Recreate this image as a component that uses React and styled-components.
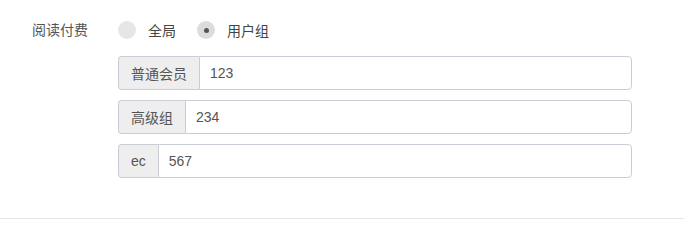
import styled, { createGlobalStyle } from "styled-components";

const GlobalStyle = createGlobalStyle`
  body {
    margin: 0;
    background: #fff;
    font-family: "Liberation Sans", "Noto Sans CJK SC", sans-serif;
    font-size: 14px;
    color: #555;
  }
`;

const Page = styled.div`
  width: 684px;
  height: 249px;
  overflow: hidden;
`;

const Form = styled.div`
  padding: 13px 0 40px 32px;
  display: flex;
`;

const Label = styled.div`
  width: 86px;
  height: 34px;
  line-height: 34px;
  color: #555;
`;

const Controls = styled.div`
  display: flex;
  flex-direction: column;
  width: 514px;
`;

const RadioRow = styled.div`
  display: flex;
  align-items: center;
  height: 34px;
  margin-bottom: 9px;
`;

const RadioOption = styled.label`
  display: flex;
  align-items: center;
  margin-right: 21px;
  color: #444;
  cursor: pointer;
`;

const RadioCircle = styled.span`
  width: 18px;
  height: 18px;
  border-radius: 50%;
  background: ${(props) => (props.checked ? "#dcdcdc" : "#e6e6e6")};
  display: flex;
  align-items: center;
  justify-content: center;
  margin-right: 12px;

  &::after {
    content: "";
    width: 5px;
    height: 5px;
    border-radius: 50%;
    background: #555;
    display: ${(props) => (props.checked ? "block" : "none")};
  }
`;

const Group = styled.div`
  display: flex;
  height: 34px;
  margin-bottom: 10px;
  &:last-child {
    margin-bottom: 0;
  }
`;

const Addon = styled.span`
  display: flex;
  align-items: center;
  padding: 0 12px;
  background: #eee;
  border: 1px solid #c9ced6;
  border-right: 0;
  border-radius: 4px 0 0 4px;
  color: #555;
  white-space: nowrap;
`;

const Input = styled.input`
  flex: 1;
  min-width: 0;
  box-sizing: border-box;
  height: 34px;
  padding: 0 10px;
  border: 1px solid #c9ced6;
  border-radius: 0 4px 4px 0;
  font: inherit;
  color: #555;
  outline: none;
`;

const Divider = styled.div`
  height: 1px;
  background: #e6e6e6;
`;

const groups = [
  { name: "普通会员", value: "123" },
  { name: "高级组", value: "234" },
  { name: "ec", value: "567" },
];

export default function App() {
  return (
    <Page>
      <GlobalStyle />
      <Form>
        <Label>阅读付费</Label>
        <Controls>
          <RadioRow>
            <RadioOption>
              <RadioCircle />
              全局
            </RadioOption>
            <RadioOption>
              <RadioCircle checked />
              用户组
            </RadioOption>
          </RadioRow>
          {groups.map((g) => (
            <Group key={g.name}>
              <Addon>{g.name}</Addon>
              <Input defaultValue={g.value} />
            </Group>
          ))}
        </Controls>
      </Form>
      <Divider />
    </Page>
  );
}
